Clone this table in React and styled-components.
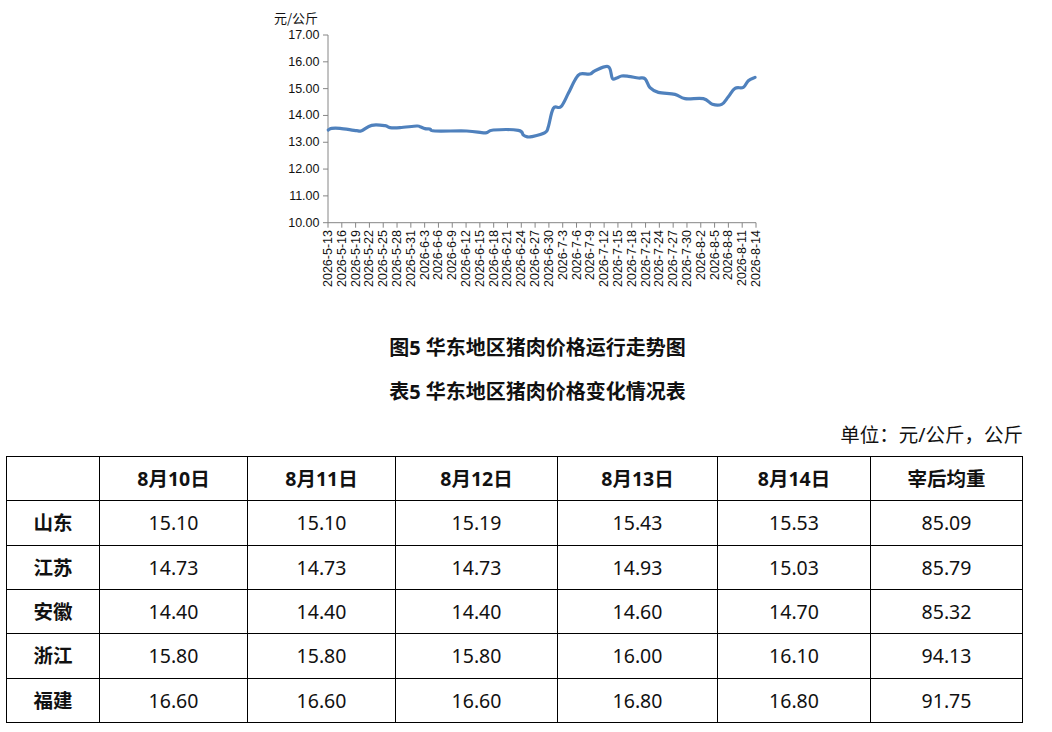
import React from "react";
import styled, { createGlobalStyle } from "styled-components";

const Global = createGlobalStyle`
  html, body { margin: 0; padding: 0; background: #fff; }
  body { font-family: "Noto Sans", "Noto Sans CJK SC", sans-serif; color: #111; }
`;

const Page = styled.div`
  width: 1052px;
  height: 732px;
  overflow: hidden;
  display: flex;
  flex-direction: column;
`;

const ChartWrap = styled.div`
  padding-left: 260px;
  height: 326px;
`;

const Caption = styled.div`
  text-align: center;
  padding-left: 23px;
  font-family: "Noto Sans", "Noto Sans CJK SC", sans-serif;
  font-weight: 700;
  font-size: 20px;
  line-height: 44px;
  height: 44px;
  color: #111;
`;

const Unit = styled.div`
  text-align: right;
  padding-right: 29px;
  font-size: 19.5px;
  line-height: 42px;
  height: 42px;
  color: #111;
`;

const TableWrap = styled.div`
  padding-left: 6px;
`;

const Table = styled.table`
  border-collapse: collapse;
  table-layout: fixed;
  width: 1016px;
  font-size: 19.5px;
  color: #111;
`;

const Row = styled.tr`
  height: ${(p) => p.$h}px;
`;

const Cell = styled.td`
  border: 1px solid #000;
  text-align: center;
  vertical-align: middle;
  padding: 0;
  line-height: 24px;
  font-weight: ${(p) => (p.$bold ? 700 : 400)};
`;

const colWidths = [93, 148, 148, 162, 160, 153, 152];
const headers = ["", "8月10日", "8月11日", "8月12日", "8月13日", "8月14日", "宰后均重"];
const rows = [
  ["山东", "15.10", "15.10", "15.19", "15.43", "15.53", "85.09"],
  ["江苏", "14.73", "14.73", "14.73", "14.93", "15.03", "85.79"],
  ["安徽", "14.40", "14.40", "14.40", "14.60", "14.70", "85.32"],
  ["浙江", "15.80", "15.80", "15.80", "16.00", "16.10", "94.13"],
  ["福建", "16.60", "16.60", "16.60", "16.80", "16.80", "91.75"],
];
const rowH = [45, 44, 44, 45, 44];

// traced series (3x scale coords relative to chart origin)
const trace = [
  [205, 390], [215, 385], [240, 385], [290, 392], [305, 392], [335, 376], [375, 377],
  [390, 383], [420, 383], [470, 378], [480, 380], [495, 386], [510, 387], [525, 393],
  [620, 393], [665, 398], [680, 398], [700, 390], [775, 391], [790, 405], [800, 410],
  [815, 410], [855, 398], [865, 380], [880, 325], [903, 320], [925, 280], [945, 240],
  [960, 222], [990, 222], [1005, 212], [1045, 200], [1057, 235], [1070, 234], [1085, 228],
  [1105, 229], [1135, 234], [1155, 236], [1170, 263], [1195, 277], [1245, 283],
  [1275, 296], [1330, 296], [1357, 313], [1385, 313], [1405, 290], [1425, 265],
  [1450, 262], [1465, 242], [1485, 232],
].map(([x, y]) => [x / 3, y / 3]);

function smoothPath(pts) {
  let d = `M${pts[0][0]},${pts[0][1]}`;
  const t = 0.18;
  for (let i = 0; i < pts.length - 1; i++) {
    const p0 = pts[i - 1] || pts[i];
    const p1 = pts[i];
    const p2 = pts[i + 1];
    const p3 = pts[i + 2] || p2;
    const c1 = [p1[0] + (p2[0] - p0[0]) * t, p1[1] + (p2[1] - p0[1]) * t];
    const c2 = [p2[0] - (p3[0] - p1[0]) * t, p2[1] - (p3[1] - p1[1]) * t];
    d += ` C${c1[0].toFixed(2)},${c1[1].toFixed(2)} ${c2[0].toFixed(2)},${c2[1].toFixed(2)} ${p2[0].toFixed(2)},${p2[1].toFixed(2)}`;
  }
  return d;
}

const X0 = 68;
const X1 = 496;
const Y10 = 222.7;
const Y17 = 35;
const yOf = (v) => Y10 - ((v - 10) * (Y10 - Y17)) / 7;
const step = (X1 - X0) / 31;

const dates = Array.from({ length: 32 }, (_, i) => {
  const dt = new Date(2026, 4, 13 + i * 3);
  return `2026-${dt.getMonth() + 1}-${dt.getDate()}`;
});

const AxisText = styled.text`
  font-family: "Liberation Sans", Arial, sans-serif;
  font-size: 12.5px;
  fill: #111;
`;

const UnitText = styled.text`
  font-family: "Noto Sans CJK SC", sans-serif;
  font-size: 13px;
  fill: #111;
`;

function Chart() {
  const ticks = [10, 11, 12, 13, 14, 15, 16, 17];
  return (
    <svg width="510" height="326" viewBox="0 0 510 326">
      <UnitText x="14" y="23">元/公斤</UnitText>
      <line x1={X0} y1={Y17} x2={X0} y2={Y10} stroke="#868686" strokeWidth="1" />
      <line x1={X0} y1={Y10} x2={X1} y2={Y10} stroke="#868686" strokeWidth="1" />
      {ticks.map((v) => (
        <g key={v}>
          <line x1={X0 - 5} y1={yOf(v)} x2={X0} y2={yOf(v)} stroke="#868686" />
          <AxisText x="59.5" y={yOf(v)} textAnchor="end" dominantBaseline="central">
            {v.toFixed(2)}
          </AxisText>
        </g>
      ))}
      {dates.map((d, i) => {
        const x = X0 + i * step;
        return (
          <g key={d}>
            <line x1={x} y1={Y10} x2={x} y2={Y10 + 5} stroke="#868686" />
            <AxisText
              transform={`translate(${x.toFixed(2)},230) rotate(-90)`}
              textAnchor="end"
              dominantBaseline="central"
            >
              {d}
            </AxisText>
          </g>
        );
      })}
      <path
        d={smoothPath(trace)}
        fill="none"
        stroke="#4f81bd"
        strokeWidth="3.2"
        strokeLinejoin="round"
        strokeLinecap="round"
      />
    </svg>
  );
}

export default function App() {
  return (
    <Page>
      <Global />
      <ChartWrap>
        <Chart />
      </ChartWrap>
      <Caption>图5 华东地区猪肉价格运行走势图</Caption>
      <Caption>表5 华东地区猪肉价格变化情况表</Caption>
      <Unit>单位：元/公斤，公斤</Unit>
      <TableWrap>
        <Table>
          <colgroup>
            {colWidths.map((w, i) => (
              <col key={i} style={{ width: w }} />
            ))}
          </colgroup>
          <thead>
            <Row $h={44}>
              {headers.map((h, i) => (
                <Cell as="th" key={i} $bold>
                  {h}
                </Cell>
              ))}
            </Row>
          </thead>
          <tbody>
            {rows.map((r, ri) => (
              <Row key={ri} $h={rowH[ri]}>
                {r.map((c, ci) => (
                  <Cell key={ci} $bold={ci === 0}>
                    {c}
                  </Cell>
                ))}
              </Row>
            ))}
          </tbody>
        </Table>
      </TableWrap>
    </Page>
  );
}
